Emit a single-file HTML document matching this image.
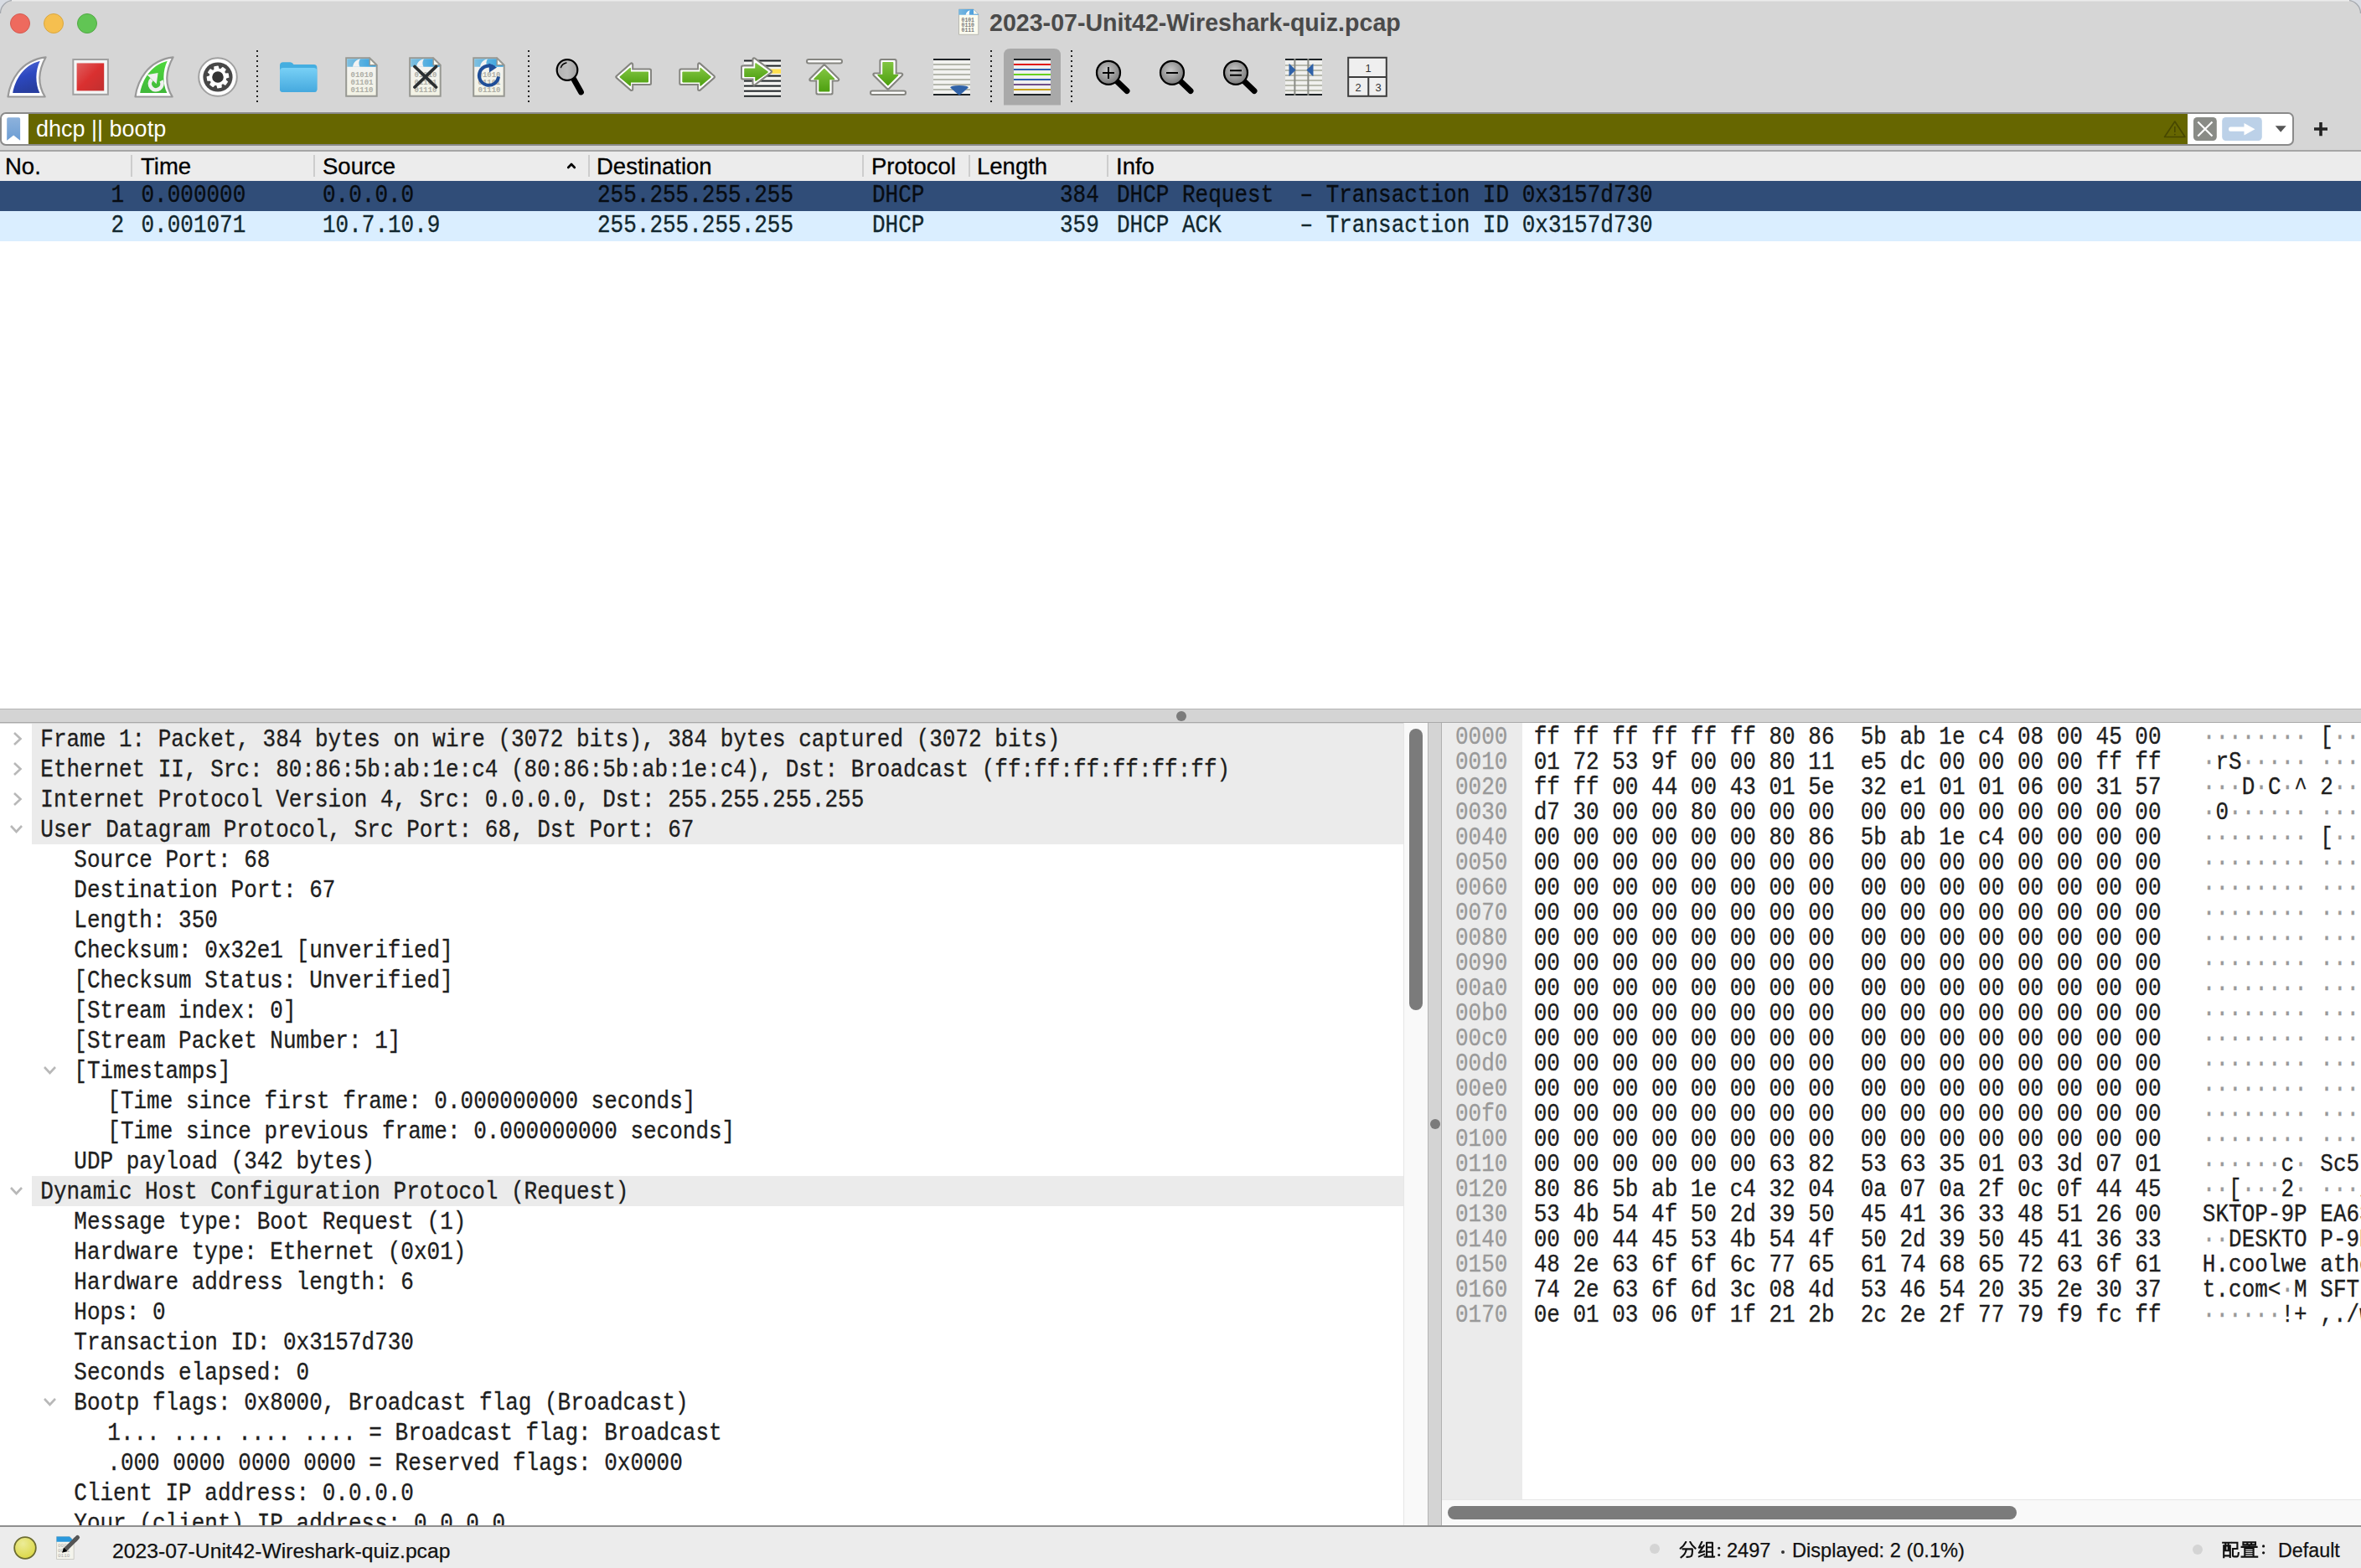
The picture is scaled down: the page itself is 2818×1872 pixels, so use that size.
<!DOCTYPE html>
<html><head><meta charset="utf-8">
<style>
*{margin:0;padding:0;box-sizing:border-box}
html,body{width:2818px;height:1872px;overflow:hidden;background:#d6d6d6}
body{position:relative;font-family:"Liberation Sans",sans-serif;color:#1e1e1e}
.a{position:absolute}
.mono{font-family:"Liberation Mono",monospace;font-size:26px;white-space:pre;-webkit-text-stroke:0.3px currentColor;transform:scaleY(1.12);transform-origin:0 24px}
.sans{font-family:"Liberation Sans",sans-serif;white-space:pre}
#title{left:1181px;top:7px;font-size:28.6px;font-weight:bold;color:#4a4a4a;line-height:40px}
.tl{width:24px;height:24px;border-radius:50%;top:16px}
.sep{width:2px;top:60px;height:62px;background:repeating-linear-gradient(to bottom,#222 0 2px,transparent 2px 6px)}
#filter{left:0;top:134px;width:2738px;height:40px;border:2px solid #8a8a8a;border-radius:7px;background:#fff;overflow:hidden}
#olive{left:32px;top:0;width:2577px;height:36px;background:#666600}
#ftext{left:43px;top:134px;height:40px;line-height:40px;font-size:27px;color:#fff}
#hdr{left:0;top:179px;width:2818px;height:37px;background:#ececec;border-top:2px solid #a6a6a6}
.hd{top:180.5px;height:35px;line-height:36px;font-size:27.5px;color:#000;-webkit-text-stroke:0.3px #000;margin-left:1px}
.hdiv{top:185px;width:2px;height:26px;background:#cdcdcd}
.row{left:0;width:2818px;height:36px}
.pr{line-height:36px;color:#12272e}
.sel{color:#070c12}
#plist{left:0;top:287px;width:2818px;height:559px;background:#fff}
#hsplit{left:0;top:846px;width:2818px;height:17px;background:#d4d4d4;border-top:1px solid #b4b4b4;border-bottom:1px solid #a9a9a9}
#detail{left:0;top:864px;width:1704px;height:958px;background:#fff;overflow:hidden}
.dr{left:0;width:1675px;height:36px;line-height:36px}
.dg{background:#ebebeb}
.dt{color:#1e1e1e}
#vscroll{left:1675px;top:863px;width:30px;height:958px;background:#f9f9f9;border-left:1px solid #e6e6e6;border-right:1px solid #b4b4b4}
#vsplit{left:1705px;top:863px;width:15px;height:958px;background:#d4d4d4}
#hex{left:1720px;top:863px;width:1098px;height:958px;background:#fff;border-left:1px solid #b0b0b0;overflow:hidden}
#offcol{left:0;top:0;width:96px;height:927px;background:#ebebeb}
.hx{line-height:30px;height:30px}
#hscroll{left:0;top:927px;width:1098px;height:31px;background:#f9f9f9;border-top:1px solid #e6e6e6}
.dg{left:38px;width:1637px;height:36px;background:#ebebeb}
.dt{line-height:36px;height:36px;color:#1e1e1e}
.hr{position:absolute;left:16px;line-height:30px;height:30px;color:#1e1e1e;font-family:"Liberation Mono",monospace;font-size:26px;white-space:pre;-webkit-text-stroke:0.3px currentColor;transform:scaleY(1.12);transform-origin:0 21px}
.hr b{font-weight:normal;color:#999}
.hr i{font-style:normal;color:#999}
#status{left:0;top:1821px;width:2818px;height:51px;background:#ececec;border-top:2px solid #8f8f8f}
</style></head><body>

<!-- title bar -->
<div class="a tl" style="left:12px;background:#ee6a5e;border:1px solid #d45a50"></div>
<div class="a tl" style="left:52px;background:#f5bf4f;border:1px solid #d9a73f"></div>
<div class="a tl" style="left:92px;background:#61c554;border:1px solid #52a845"></div>
<div class="a" id="title">2023-07-Unit42-Wireshark-quiz.pcap</div>

<svg class="a" style="left:0;top:0" width="1700" height="134" viewBox="0 0 1700 134">
<defs>
<linearGradient id="gBlue" x1="0" y1="0" x2="0.3" y2="1"><stop offset="0" stop-color="#5a70d8"/><stop offset="0.55" stop-color="#2c48c0"/><stop offset="1" stop-color="#283ea0"/></linearGradient>
<linearGradient id="gRed" x1="0" y1="0" x2="1" y2="1"><stop offset="0" stop-color="#e06060"/><stop offset="0.5" stop-color="#da3030"/><stop offset="1" stop-color="#c03030"/></linearGradient>
<linearGradient id="gGreenFin" x1="0" y1="0" x2="0" y2="1"><stop offset="0" stop-color="#4ed83c"/><stop offset="1" stop-color="#40b83a"/></linearGradient>
<linearGradient id="gArrow" x1="0" y1="0" x2="0" y2="1"><stop offset="0" stop-color="#80c440"/><stop offset="1" stop-color="#4ea010"/></linearGradient>
<linearGradient id="gFolder" x1="0" y1="0" x2="0" y2="1"><stop offset="0" stop-color="#78d0f6"/><stop offset="1" stop-color="#45a9de"/></linearGradient>
<linearGradient id="gDocTop" x1="0" y1="0" x2="1" y2="0"><stop offset="0" stop-color="#80c0e0"/><stop offset="1" stop-color="#30a0e0"/></linearGradient>
<linearGradient id="gDoc" x1="0" y1="0" x2="0" y2="1"><stop offset="0" stop-color="#f4f4f4"/><stop offset="1" stop-color="#f2f2e4"/></linearGradient>
<radialGradient id="gLens" cx="0.45" cy="0.4" r="0.6"><stop offset="0" stop-color="#c8c8c8"/><stop offset="1" stop-color="#7a7a7a"/></radialGradient>
<linearGradient id="gLens2" x1="0" y1="0" x2="1" y2="0"><stop offset="0" stop-color="#b0b0b0"/><stop offset="0.5" stop-color="#bdbdbd"/><stop offset="1" stop-color="#a0a0a0"/></linearGradient>
<g id="fin"><path d="M9.5 115.5 C12 97 24 72 54.6 68.3 C46 84 44 100 53.7 115.5 Z" fill="#fff" stroke="#999" stroke-width="2.2" stroke-linejoin="round"/></g>
<g id="doc"><path d="M413.2 69.2 H441.2 L449.7 77.6 V114.7 H413.2 Z" fill="url(#gDoc)" stroke="#979892" stroke-width="2"/>
<path d="M414.2 70.2 H440.8 L448.7 78.2 V79.8 H414.2 Z" fill="url(#gDocTop)"/>
<path d="M441.2 69.8 V77.6 H449 Z" fill="#f6f6ee" stroke="#979892" stroke-width="1.4"/>
<path d="M421 79.8 C422 74 426 71 430 70.6 C428 73 428 77 429.5 79.8 Z" fill="#f2f2f2"/>
<g font-family="Liberation Mono" font-size="9" fill="#a6a69e" font-weight="bold" opacity="0.9"><text x="418.5" y="92">01010</text><text x="418.5" y="101">01101</text><text x="418.5" y="110">01110</text></g></g>
</defs>
<!-- capture fin blue -->
<use href="#fin"/>
<path d="M15.2 110.9 C18 96 27 78 47.8 72.7 C42 84 42 100 47.4 110.9 Z" fill="url(#gBlue)"/>
<!-- stop -->
<rect x="87.3" y="71" width="41.6" height="41.8" fill="#f4f6f6" stroke="#a0a0a0" stroke-width="2"/>
<rect x="91.6" y="75.4" width="32.6" height="33" fill="url(#gRed)"/>
<!-- restart fin green -->
<use href="#fin" x="152"/>
<path d="M167.2 110.9 C170 96 179 78 199.8 72.7 C194 84 194 100 199.4 110.9 Z" fill="url(#gGreenFin)"/>
<path d="M181 94.8 A7.3 7.3 0 1 0 192.5 96.3" fill="none" stroke="#f0f0f0" stroke-width="4.6"/>
<path d="M175.5 89.2 L188.6 87 L186.8 100.3 Z" fill="#f0f0f0"/>
<!-- options gear -->
<circle cx="260" cy="92" r="22.8" fill="#fff" stroke="#a0a0a0" stroke-width="2"/>
<circle cx="260" cy="92" r="17.6" fill="#474747"/>
<g transform="translate(260 92)" fill="#fff">
<path d="M-3.90 -8.77 L-4.03 -12.04 L0.11 -12.70 L1.00 -9.55 L3.44 -8.96 L5.67 -11.37 L9.06 -8.90 L7.46 -6.04 L8.77 -3.90 L12.04 -4.03 L12.70 0.11 L9.55 1.00 L8.96 3.44 L11.37 5.67 L8.90 9.06 L6.04 7.46 L3.90 8.77 L4.03 12.04 L-0.11 12.70 L-1.00 9.55 L-3.44 8.96 L-5.67 11.37 L-9.06 8.90 L-7.46 6.04 L-8.77 3.90 L-12.04 4.03 L-12.70 -0.11 L-9.55 -1.00 L-8.96 -3.44 L-11.37 -5.67 L-8.90 -9.06 L-6.04 -7.46 Z" stroke="#fff" stroke-width="1.4" stroke-linejoin="round"/>
<circle r="6.8" fill="#333"/>
</g>
<!-- separators -->
<g fill="#1a1a1a"><rect x="306" y="60" width="2" height="2"/></g>
<!-- folder -->
<path d="M334 108 V78 Q334 74.2 338 74.2 H346.5 Q349 74.2 350.5 77 H374.5 Q378.4 77 378.4 81 V106.5 Q378.4 110 374.5 110 H338 Q334 110 334 106 Z" fill="#45aee0"/>
<path d="M334 85 Q334 81 338 81 H374.5 Q378.4 81 378.4 85 V106.5 Q378.4 110 374.5 110 H338 Q334 110 334 106.5 Z" fill="url(#gFolder)"/>
<!-- docs -->
<use href="#doc"/>
<use href="#doc" x="76"/>
<use href="#doc" x="152"/>
<path d="M495 79.5 L520.5 104 M520.5 79.5 L495 104" stroke="#2b2f31" stroke-width="3.8" stroke-linecap="round"/>
<path d="M590 80.6 A11.6 11.6 0 1 0 595 91.5" fill="none" stroke="#1f4e98" stroke-width="4"/>
<path d="M583.5 75.5 L593 80.5 L584 86.5 Z" fill="#1f4e98"/>
<!-- find -->
<line x1="684.5" y1="94" x2="693.5" y2="110" stroke="#000" stroke-width="6.8" stroke-linecap="round"/>
<circle cx="677" cy="83.5" r="12.3" fill="url(#gLens2)" stroke="#000" stroke-width="2.2"/>
<path d="M669.5 80.5 Q671 76 676 75" fill="none" stroke="#000" stroke-width="1.4" stroke-linecap="round"/>
<!-- prev arrow -->
<path d="M736.8 91.8 L753.7 77 V84 H775.5 V99.5 H753.7 V106.6 Z" fill="#858580" stroke="#858580" stroke-width="5" stroke-linejoin="round"/><path d="M736.8 91.8 L753.7 77 V84 H775.5 V99.5 H753.7 V106.6 Z" fill="#fff" stroke="#fff" stroke-width="1" stroke-linejoin="round"/><path d="M740.3 91.8 L752.2 81.6 V86.2 H773.2 V97.6 H752.2 V102 Z" fill="url(#gArrow)" stroke="url(#gArrow)" stroke-width="1.6" stroke-linejoin="round"/>
<!-- next arrow -->
<path d="M851.5 91.8 L834.6 77 V84 H812.8 V99.5 H834.6 V106.6 Z" fill="#858580" stroke="#858580" stroke-width="5" stroke-linejoin="round"/><path d="M851.5 91.8 L834.6 77 V84 H812.8 V99.5 H834.6 V106.6 Z" fill="#fff" stroke="#fff" stroke-width="1" stroke-linejoin="round"/><path d="M848 91.8 L836.1 81.6 V86.2 H815.1 V97.6 H836.1 V102 Z" fill="url(#gArrow)" stroke="url(#gArrow)" stroke-width="1.6" stroke-linejoin="round"/>
<!-- go to packet -->
<rect x="888" y="72" width="44" height="44" fill="#f2f2f0"/>
<g fill="#1e2326"><rect x="888" y="71.5" width="44" height="2"/><rect x="888" y="77.6" width="44" height="2"/><rect x="888" y="89.6" width="44" height="2"/><rect x="888" y="95.6" width="44" height="2"/><rect x="888" y="101.6" width="44" height="2"/><rect x="888" y="107.7" width="44" height="2"/><rect x="888" y="113.8" width="44" height="2"/></g>
<rect x="918" y="82.4" width="14" height="5.4" fill="#ffe050"/>
<path d="M886.5 93 V80 H900 V70.8 L919.5 85.5 L900 100.2 V93 Z" fill="#858580" stroke="#858580" stroke-width="5" stroke-linejoin="round"/><path d="M886.5 93 V80 H900 V70.8 L919.5 85.5 L900 100.2 V93 Z" fill="#fff" stroke="#fff" stroke-width="1" stroke-linejoin="round"/><path d="M889 91.2 V82.2 H902 V76 L916 86 L902 96 V91.2 Z" fill="url(#gArrow)" stroke="url(#gArrow)" stroke-width="1.6" stroke-linejoin="round"/>
<!-- first packet -->
<rect x="963" y="71" width="42" height="4.6" rx="2.3" fill="#fff" stroke="#858580" stroke-width="2"/>
<path d="M983.8 79 L999.8 95 H992.1 V111 H975.9 V95 H967.8 Z" fill="#858580" stroke="#858580" stroke-width="5" stroke-linejoin="round"/><path d="M983.8 79 L999.8 95 H992.1 V111 H975.9 V95 H967.8 Z" fill="#fff" stroke="#fff" stroke-width="1" stroke-linejoin="round"/><path d="M983.8 82.6 L995.5 94.4 H989.6 V108.8 H978 V94.4 H972.1 Z" fill="url(#gArrow)" stroke="url(#gArrow)" stroke-width="1.6" stroke-linejoin="round"/>
<!-- last packet -->
<rect x="1039" y="108.5" width="42" height="4.6" rx="2.3" fill="#fff" stroke="#858580" stroke-width="2"/>
<path d="M1059.8 105 L1075.8 89 H1068.1 V72.5 H1051.9 V89 H1043.8 Z" fill="#858580" stroke="#858580" stroke-width="5" stroke-linejoin="round"/><path d="M1059.8 105 L1075.8 89 H1068.1 V72.5 H1051.9 V89 H1043.8 Z" fill="#fff" stroke="#fff" stroke-width="1" stroke-linejoin="round"/><path d="M1059.8 101.4 L1071.5 89.6 H1065.6 V74.8 H1054 V89.6 H1048.1 Z" fill="url(#gArrow)" stroke="url(#gArrow)" stroke-width="1.6" stroke-linejoin="round"/>
<!-- autoscroll -->
<rect x="1114" y="71" width="44" height="42" fill="#f2f2f0"/>
<g fill="#b4b6ac"><rect x="1114" y="76" width="44" height="2"/><rect x="1114" y="82" width="44" height="2"/><rect x="1114" y="88" width="44" height="2"/><rect x="1114" y="94" width="44" height="2"/><rect x="1114" y="100" width="44" height="2"/><rect x="1114" y="106" width="44" height="2"/></g>
<rect x="1114" y="70" width="44" height="2" fill="#1e2326"/><rect x="1114" y="112" width="44" height="2" fill="#1e2326"/>
<path d="M1134.2 104.5 Q1134.2 102 1145 102 Q1155.8 102 1155.8 104.5 Q1150 110 1145 113.8 Q1140 110 1134.2 104.5 Z" fill="#3062a8"/>
<!-- colorize active -->
<path d="M1198 125.6 V66 Q1198 57.9 1206 57.9 H1258 Q1266 57.9 1266 66 V125.6 Z" fill="#a9a9a9"/>
<rect x="1210" y="71" width="44" height="42" fill="#f0f0f0"/>
<rect x="1210" y="70" width="44" height="2" fill="#1e2326"/><rect x="1210" y="112" width="44" height="2" fill="#1e2326"/>
<rect x="1210" y="76" width="44" height="2" fill="#e01818"/>
<rect x="1210" y="82" width="44" height="2" fill="#2a5cb0"/>
<rect x="1210" y="88" width="44" height="2" fill="#68d020"/>
<rect x="1210" y="94" width="44" height="2" fill="#2a5cb0"/>
<rect x="1210" y="100" width="44" height="2" fill="#70508a"/>
<rect x="1210" y="106" width="44" height="2" fill="#c8a018"/>
<!-- zoom in/out/normal -->
<g id="zm"><line x1="1333" y1="97" x2="1345" y2="108.5" stroke="#000" stroke-width="7" stroke-linecap="round"/>
<circle cx="1323" cy="86.8" r="14" fill="url(#gLens)" stroke="#000" stroke-width="2.2"/></g>
<use href="#zm" x="76"/>
<use href="#zm" x="152"/>
<path d="M1316 87 H1330 M1323 80 V94" stroke="#000" stroke-width="2"/>
<path d="M1392 87 H1406" stroke="#000" stroke-width="2"/>
<path d="M1468 84.3 H1482 M1468 89.7 H1482" stroke="#000" stroke-width="2"/>
<!-- resize columns -->
<rect x="1534" y="71" width="44" height="42" fill="#f0f0ee"/>
<g fill="#b8baae"><rect x="1534" y="77" width="44" height="2"/><rect x="1534" y="83" width="44" height="2"/><rect x="1534" y="89" width="44" height="2"/><rect x="1534" y="95" width="44" height="2"/><rect x="1534" y="101" width="44" height="2"/><rect x="1534" y="107" width="44" height="2"/></g>
<rect x="1534" y="70" width="44" height="2" fill="#1e2326"/><rect x="1534" y="112" width="44" height="2" fill="#1e2326"/>
<rect x="1544.4" y="70" width="2" height="44" fill="#8a8c86"/><rect x="1560.4" y="70" width="2" height="44" fill="#8a8c86"/>
<path d="M1538.5 77 Q1538 76 1539.5 76.5 L1546.5 83.5 L1539.5 90.5 Q1538 91 1538.5 90 Z" fill="#3062a8"/>
<path d="M1567.5 77 Q1568 76 1566.5 76.5 L1559.5 83.5 L1566.5 90.5 Q1568 91 1567.5 90 Z" fill="#3062a8"/>
<!-- layout -->
<rect x="1609.2" y="68.8" width="45.6" height="46" fill="#efefef" stroke="#3c3c3c" stroke-width="2"/>
<path d="M1609.2 91.9 H1654.8 M1633.3 91.9 V114.8" stroke="#3c3c3c" stroke-width="2"/>
<g font-family="Liberation Sans" font-size="13" fill="#333" text-anchor="middle"><text x="1633" y="86">1</text><text x="1621" y="109">2</text><text x="1645" y="109">3</text></g>
</svg>

<div class="a sep" style="left:306px"></div>
<div class="a sep" style="left:630px"></div>
<div class="a sep" style="left:1182px"></div>
<div class="a sep" style="left:1278px"></div>
<!-- filter -->
<div class="a" id="filter"><div class="a" id="olive"></div></div>
<div class="a sans" id="ftext">dhcp || bootp</div>

<!-- header -->
<div class="a" id="hdr"></div>
<div class="a sans hd" style="left:5px">No.</div>
<div class="a hdiv" style="left:156px"></div>
<div class="a sans hd" style="left:167px">Time</div>
<div class="a hdiv" style="left:374px"></div>
<div class="a sans hd" style="left:384px">Source</div>
<svg class="a" style="left:676px;top:192px" width="14" height="12"><polyline points="2.2,8 6,4 9.8,8" fill="none" stroke="#000" stroke-width="2.6" stroke-linecap="round" stroke-linejoin="round"/></svg>
<div class="a hdiv" style="left:702px"></div>
<div class="a sans hd" style="left:711px">Destination</div>
<div class="a hdiv" style="left:1029px"></div>
<div class="a sans hd" style="left:1039px">Protocol</div>
<div class="a hdiv" style="left:1156px"></div>
<div class="a sans hd" style="left:1165px">Length</div>
<div class="a hdiv" style="left:1321px"></div>
<div class="a sans hd" style="left:1331px">Info</div>

<!-- packet list -->
<div class="a" id="plist"></div>
<div class="a row" style="top:216px;background:#304d78"></div>
<div class="a row" style="top:252px;background:#daeeff"></div>
<div class="a mono pr sel" style="top:216px;left:132.5px">1</div>
<div class="a mono pr sel" style="top:216px;left:168.5px">0.000000</div>
<div class="a mono pr sel" style="top:216px;left:385px">0.0.0.0</div>
<div class="a mono pr sel" style="top:216px;left:713px">255.255.255.255</div>
<div class="a mono pr sel" style="top:216px;left:1041px">DHCP</div>
<div class="a mono pr sel" style="top:216px;left:1265px">384</div>
<div class="a mono pr sel" style="top:216px;left:1333px">DHCP Request  – Transaction ID 0x3157d730</div>
<div class="a mono pr" style="top:252px;left:132.5px">2</div>
<div class="a mono pr" style="top:252px;left:168.5px">0.001071</div>
<div class="a mono pr" style="top:252px;left:385px">10.7.10.9</div>
<div class="a mono pr" style="top:252px;left:713px">255.255.255.255</div>
<div class="a mono pr" style="top:252px;left:1041px">DHCP</div>
<div class="a mono pr" style="top:252px;left:1265px">359</div>
<div class="a mono pr" style="top:252px;left:1333px">DHCP ACK      – Transaction ID 0x3157d730</div>

<div class="a" id="hsplit"></div>
<div class="a" id="detail">
<div class="a dg" style="top:0px"></div>
<svg class="a" style="left:15px;top:8.5px" width="12" height="18"><polyline points="2,2 9.5,9 2,16" fill="none" stroke="#b8b8b8" stroke-width="2.6"/></svg>
<div class="a mono dt" style="left:48.3px;top:2px">Frame 1: Packet, 384 bytes on wire (3072 bits), 384 bytes captured (3072 bits)</div>
<div class="a dg" style="top:36px"></div>
<svg class="a" style="left:15px;top:44.5px" width="12" height="18"><polyline points="2,2 9.5,9 2,16" fill="none" stroke="#b8b8b8" stroke-width="2.6"/></svg>
<div class="a mono dt" style="left:48.3px;top:38px">Ethernet II, Src: 80:86:5b:ab:1e:c4 (80:86:5b:ab:1e:c4), Dst: Broadcast (ff:ff:ff:ff:ff:ff)</div>
<div class="a dg" style="top:72px"></div>
<svg class="a" style="left:15px;top:80.5px" width="12" height="18"><polyline points="2,2 9.5,9 2,16" fill="none" stroke="#b8b8b8" stroke-width="2.6"/></svg>
<div class="a mono dt" style="left:48.3px;top:74px">Internet Protocol Version 4, Src: 0.0.0.0, Dst: 255.255.255.255</div>
<div class="a dg" style="top:108px"></div>
<svg class="a" style="left:11px;top:120px" width="18" height="12"><polyline points="2,2 8.5,9 15,2" fill="none" stroke="#b8b8b8" stroke-width="2.6"/></svg>
<div class="a mono dt" style="left:48.3px;top:110px">User Datagram Protocol, Src Port: 68, Dst Port: 67</div>
<div class="a mono dt" style="left:88.3px;top:146px">Source Port: 68</div>
<div class="a mono dt" style="left:88.3px;top:182px">Destination Port: 67</div>
<div class="a mono dt" style="left:88.3px;top:218px">Length: 350</div>
<div class="a mono dt" style="left:88.3px;top:254px">Checksum: 0x32e1 [unverified]</div>
<div class="a mono dt" style="left:88.3px;top:290px">[Checksum Status: Unverified]</div>
<div class="a mono dt" style="left:88.3px;top:326px">[Stream index: 0]</div>
<div class="a mono dt" style="left:88.3px;top:362px">[Stream Packet Number: 1]</div>
<svg class="a" style="left:51px;top:408px" width="18" height="12"><polyline points="2,2 8.5,9 15,2" fill="none" stroke="#b8b8b8" stroke-width="2.6"/></svg>
<div class="a mono dt" style="left:88.3px;top:398px">[Timestamps]</div>
<div class="a mono dt" style="left:128.3px;top:434px">[Time since first frame: 0.000000000 seconds]</div>
<div class="a mono dt" style="left:128.3px;top:470px">[Time since previous frame: 0.000000000 seconds]</div>
<div class="a mono dt" style="left:88.3px;top:506px">UDP payload (342 bytes)</div>
<div class="a dg" style="top:540px"></div>
<svg class="a" style="left:11px;top:552px" width="18" height="12"><polyline points="2,2 8.5,9 15,2" fill="none" stroke="#b8b8b8" stroke-width="2.6"/></svg>
<div class="a mono dt" style="left:48.3px;top:542px">Dynamic Host Configuration Protocol (Request)</div>
<div class="a mono dt" style="left:88.3px;top:578px">Message type: Boot Request (1)</div>
<div class="a mono dt" style="left:88.3px;top:614px">Hardware type: Ethernet (0x01)</div>
<div class="a mono dt" style="left:88.3px;top:650px">Hardware address length: 6</div>
<div class="a mono dt" style="left:88.3px;top:686px">Hops: 0</div>
<div class="a mono dt" style="left:88.3px;top:722px">Transaction ID: 0x3157d730</div>
<div class="a mono dt" style="left:88.3px;top:758px">Seconds elapsed: 0</div>
<svg class="a" style="left:51px;top:804px" width="18" height="12"><polyline points="2,2 8.5,9 15,2" fill="none" stroke="#b8b8b8" stroke-width="2.6"/></svg>
<div class="a mono dt" style="left:88.3px;top:794px">Bootp flags: 0x8000, Broadcast flag (Broadcast)</div>
<div class="a mono dt" style="left:128.3px;top:830px">1... .... .... .... = Broadcast flag: Broadcast</div>
<div class="a mono dt" style="left:128.3px;top:866px">.000 0000 0000 0000 = Reserved flags: 0x0000</div>
<div class="a mono dt" style="left:88.3px;top:902px">Client IP address: 0.0.0.0</div>
<div class="a mono dt" style="left:88.3px;top:938px">Your (client) IP address: 0.0.0.0</div>
</div>
<div class="a" id="vscroll"></div>
<div class="a" id="vsplit"></div>
<div class="a" id="hex"><div class="a" id="offcol"></div>
<div class="hr" style="top:3px"><b>0000</b>  ff ff ff ff ff ff 80 86  5b ab 1e c4 08 00 45 00   <span style="position:relative;left:2.5px"><i>·</i><i>·</i><i>·</i><i>·</i><i>·</i><i>·</i><i>·</i><i>·</i> [<i>·</i><i>·</i><i>·</i><i>·</i><i>·</i>E<i>·</i></span></div>
<div class="hr" style="top:33px"><b>0010</b>  01 72 53 9f 00 00 80 11  e5 dc 00 00 00 00 ff ff   <span style="position:relative;left:2.5px"><i>·</i>rS<i>·</i><i>·</i><i>·</i><i>·</i><i>·</i> <i>·</i><i>·</i><i>·</i><i>·</i><i>·</i><i>·</i><i>·</i><i>·</i></span></div>
<div class="hr" style="top:63px"><b>0020</b>  ff ff 00 44 00 43 01 5e  32 e1 01 01 06 00 31 57   <span style="position:relative;left:2.5px"><i>·</i><i>·</i><i>·</i>D<i>·</i>C<i>·</i>^ 2<i>·</i><i>·</i><i>·</i><i>·</i><i>·</i>1W</span></div>
<div class="hr" style="top:93px"><b>0030</b>  d7 30 00 00 80 00 00 00  00 00 00 00 00 00 00 00   <span style="position:relative;left:2.5px"><i>·</i>0<i>·</i><i>·</i><i>·</i><i>·</i><i>·</i><i>·</i> <i>·</i><i>·</i><i>·</i><i>·</i><i>·</i><i>·</i><i>·</i><i>·</i></span></div>
<div class="hr" style="top:123px"><b>0040</b>  00 00 00 00 00 00 80 86  5b ab 1e c4 00 00 00 00   <span style="position:relative;left:2.5px"><i>·</i><i>·</i><i>·</i><i>·</i><i>·</i><i>·</i><i>·</i><i>·</i> [<i>·</i><i>·</i><i>·</i><i>·</i><i>·</i><i>·</i><i>·</i></span></div>
<div class="hr" style="top:153px"><b>0050</b>  00 00 00 00 00 00 00 00  00 00 00 00 00 00 00 00   <span style="position:relative;left:2.5px"><i>·</i><i>·</i><i>·</i><i>·</i><i>·</i><i>·</i><i>·</i><i>·</i> <i>·</i><i>·</i><i>·</i><i>·</i><i>·</i><i>·</i><i>·</i><i>·</i></span></div>
<div class="hr" style="top:183px"><b>0060</b>  00 00 00 00 00 00 00 00  00 00 00 00 00 00 00 00   <span style="position:relative;left:2.5px"><i>·</i><i>·</i><i>·</i><i>·</i><i>·</i><i>·</i><i>·</i><i>·</i> <i>·</i><i>·</i><i>·</i><i>·</i><i>·</i><i>·</i><i>·</i><i>·</i></span></div>
<div class="hr" style="top:213px"><b>0070</b>  00 00 00 00 00 00 00 00  00 00 00 00 00 00 00 00   <span style="position:relative;left:2.5px"><i>·</i><i>·</i><i>·</i><i>·</i><i>·</i><i>·</i><i>·</i><i>·</i> <i>·</i><i>·</i><i>·</i><i>·</i><i>·</i><i>·</i><i>·</i><i>·</i></span></div>
<div class="hr" style="top:243px"><b>0080</b>  00 00 00 00 00 00 00 00  00 00 00 00 00 00 00 00   <span style="position:relative;left:2.5px"><i>·</i><i>·</i><i>·</i><i>·</i><i>·</i><i>·</i><i>·</i><i>·</i> <i>·</i><i>·</i><i>·</i><i>·</i><i>·</i><i>·</i><i>·</i><i>·</i></span></div>
<div class="hr" style="top:273px"><b>0090</b>  00 00 00 00 00 00 00 00  00 00 00 00 00 00 00 00   <span style="position:relative;left:2.5px"><i>·</i><i>·</i><i>·</i><i>·</i><i>·</i><i>·</i><i>·</i><i>·</i> <i>·</i><i>·</i><i>·</i><i>·</i><i>·</i><i>·</i><i>·</i><i>·</i></span></div>
<div class="hr" style="top:303px"><b>00a0</b>  00 00 00 00 00 00 00 00  00 00 00 00 00 00 00 00   <span style="position:relative;left:2.5px"><i>·</i><i>·</i><i>·</i><i>·</i><i>·</i><i>·</i><i>·</i><i>·</i> <i>·</i><i>·</i><i>·</i><i>·</i><i>·</i><i>·</i><i>·</i><i>·</i></span></div>
<div class="hr" style="top:333px"><b>00b0</b>  00 00 00 00 00 00 00 00  00 00 00 00 00 00 00 00   <span style="position:relative;left:2.5px"><i>·</i><i>·</i><i>·</i><i>·</i><i>·</i><i>·</i><i>·</i><i>·</i> <i>·</i><i>·</i><i>·</i><i>·</i><i>·</i><i>·</i><i>·</i><i>·</i></span></div>
<div class="hr" style="top:363px"><b>00c0</b>  00 00 00 00 00 00 00 00  00 00 00 00 00 00 00 00   <span style="position:relative;left:2.5px"><i>·</i><i>·</i><i>·</i><i>·</i><i>·</i><i>·</i><i>·</i><i>·</i> <i>·</i><i>·</i><i>·</i><i>·</i><i>·</i><i>·</i><i>·</i><i>·</i></span></div>
<div class="hr" style="top:393px"><b>00d0</b>  00 00 00 00 00 00 00 00  00 00 00 00 00 00 00 00   <span style="position:relative;left:2.5px"><i>·</i><i>·</i><i>·</i><i>·</i><i>·</i><i>·</i><i>·</i><i>·</i> <i>·</i><i>·</i><i>·</i><i>·</i><i>·</i><i>·</i><i>·</i><i>·</i></span></div>
<div class="hr" style="top:423px"><b>00e0</b>  00 00 00 00 00 00 00 00  00 00 00 00 00 00 00 00   <span style="position:relative;left:2.5px"><i>·</i><i>·</i><i>·</i><i>·</i><i>·</i><i>·</i><i>·</i><i>·</i> <i>·</i><i>·</i><i>·</i><i>·</i><i>·</i><i>·</i><i>·</i><i>·</i></span></div>
<div class="hr" style="top:453px"><b>00f0</b>  00 00 00 00 00 00 00 00  00 00 00 00 00 00 00 00   <span style="position:relative;left:2.5px"><i>·</i><i>·</i><i>·</i><i>·</i><i>·</i><i>·</i><i>·</i><i>·</i> <i>·</i><i>·</i><i>·</i><i>·</i><i>·</i><i>·</i><i>·</i><i>·</i></span></div>
<div class="hr" style="top:483px"><b>0100</b>  00 00 00 00 00 00 00 00  00 00 00 00 00 00 00 00   <span style="position:relative;left:2.5px"><i>·</i><i>·</i><i>·</i><i>·</i><i>·</i><i>·</i><i>·</i><i>·</i> <i>·</i><i>·</i><i>·</i><i>·</i><i>·</i><i>·</i><i>·</i><i>·</i></span></div>
<div class="hr" style="top:513px"><b>0110</b>  00 00 00 00 00 00 63 82  53 63 35 01 03 3d 07 01   <span style="position:relative;left:2.5px"><i>·</i><i>·</i><i>·</i><i>·</i><i>·</i><i>·</i>c<i>·</i> Sc5<i>·</i><i>·</i>=<i>·</i><i>·</i></span></div>
<div class="hr" style="top:543px"><b>0120</b>  80 86 5b ab 1e c4 32 04  0a 07 0a 2f 0c 0f 44 45   <span style="position:relative;left:2.5px"><i>·</i><i>·</i>[<i>·</i><i>·</i><i>·</i>2<i>·</i> <i>·</i><i>·</i><i>·</i>/<i>·</i><i>·</i>DE</span></div>
<div class="hr" style="top:573px"><b>0130</b>  53 4b 54 4f 50 2d 39 50  45 41 36 33 48 51 26 00   <span style="position:relative;left:2.5px">SKTOP-9P EA63HQ&amp;<i>·</i></span></div>
<div class="hr" style="top:603px"><b>0140</b>  00 00 44 45 53 4b 54 4f  50 2d 39 50 45 41 36 33   <span style="position:relative;left:2.5px"><i>·</i><i>·</i>DESKTO P-9PEA63</span></div>
<div class="hr" style="top:633px"><b>0150</b>  48 2e 63 6f 6f 6c 77 65  61 74 68 65 72 63 6f 61   <span style="position:relative;left:2.5px">H.coolwe athercoa</span></div>
<div class="hr" style="top:663px"><b>0160</b>  74 2e 63 6f 6d 3c 08 4d  53 46 54 20 35 2e 30 37   <span style="position:relative;left:2.5px">t.com&lt;<i>·</i>M SFT 5.07</span></div>
<div class="hr" style="top:693px"><b>0170</b>  0e 01 03 06 0f 1f 21 2b  2c 2e 2f 77 79 f9 fc ff   <span style="position:relative;left:2.5px"><i>·</i><i>·</i><i>·</i><i>·</i><i>·</i><i>·</i>!+ ,./wy<i>·</i><i>·</i><i>·</i></span></div>
<div class="a" id="hscroll"></div></div>
<div class="a" id="status"></div>

<!-- title doc icon -->
<svg class="a" style="left:1140px;top:8px" width="32" height="36" viewBox="0 0 32 36">
<defs><linearGradient id="gTb" x1="0" y1="0" x2="1" y2="0"><stop offset="0" stop-color="#7ab8e0"/><stop offset="1" stop-color="#3f98dc"/></linearGradient></defs>
<path d="M4.5 3 H22 L27.8 9 V33.3 H4.5 Z" fill="#fbfbef" stroke="#b4b4ac" stroke-width="0.9"/>
<path d="M4.2 3 H22 L27.8 9 V9.8 H4.2 Z" fill="url(#gTb)"/>
<path d="M22 3.2 V8.8 H27.4 Z" fill="#f4f4ea"/>
<path d="M12.6 9.8 C13.3 7 15 5 17.8 4.3 C16.8 6 16.6 8 17 9.8 Z" fill="#fff"/>
<g font-family="Liberation Mono" font-size="6.4" fill="#7a7a7a" font-weight="bold"><text x="7.6" y="17.9">0101</text><text x="7.6" y="23.9">0110</text><text x="7.6" y="29.9">0111</text></g>
</svg>
<!-- filter bar extras -->
<svg class="a" style="left:0;top:134px" width="40" height="40">
<defs><linearGradient id="gBm" x1="0" y1="0" x2="0" y2="1"><stop offset="0" stop-color="#8db2dc"/><stop offset="1" stop-color="#6c9dd4"/></linearGradient></defs>
<path d="M8.2 8 Q8.2 6.2 10 6.2 H22.3 Q24.1 6.2 24.1 8 V33.8 L16.2 27.6 L8.2 33.8 Z" fill="url(#gBm)"/>
</svg>
<svg class="a" style="left:2570px;top:134px" width="248" height="40" viewBox="2570 134 248 40">
<path d="M2583.5 163.5 L2595.8 145 L2608 163.5 Z" fill="none" stroke="#474700" stroke-width="1.6" stroke-linejoin="round"/>
<path d="M2595.8 151 V158" stroke="#474700" stroke-width="1.6"/><circle cx="2595.8" cy="160.6" r="0.9" fill="#474700"/>
<rect x="2618" y="140" width="27.8" height="28" rx="4.5" fill="#898b86"/>
<path d="M2623.3 145.5 L2640.5 162.5 M2640.5 145.5 L2623.3 162.5" stroke="#fff" stroke-width="2.2"/>
<rect x="2652.2" y="140" width="47.6" height="28" rx="4.5" fill="#bcd1e8"/>
<path d="M2662 151.6 H2678.5 V147 L2691.5 154.2 L2678.5 161.4 V156.8 H2662 Q2660 156.8 2660 154.2 Q2660 151.6 2662 151.6 Z" fill="#fff"/>
<path d="M2715.7 150.2 H2728.7 L2722.2 157.8 Z" fill="#555"/>
<path d="M2762 154 H2778 M2770 146 V162.2" stroke="#222" stroke-width="3.6"/>
</svg>
<!-- splitter handles -->
<div class="a" style="left:1403.8px;top:848.6px;width:12px;height:12px;border-radius:50%;background:#7b7b7b"></div>
<div class="a" style="left:1706.8px;top:1335.8px;width:12px;height:12px;border-radius:50%;background:#7b7b7b"></div>
<!-- scroll thumbs -->
<div class="a" style="left:1682px;top:870px;width:16px;height:336px;border-radius:8px;background:#7b7b7b"></div>
<div class="a" style="left:1728px;top:1798px;width:679px;height:16px;border-radius:8px;background:#7b7b7b"></div>
<!-- status bar -->
<svg class="a" style="left:0;top:1823px" width="110" height="49" viewBox="0 1823 110 49">
<defs><radialGradient id="gY" cx="0.4" cy="0.3" r="0.7"><stop offset="0" stop-color="#ecec98"/><stop offset="1" stop-color="#dcd848"/></radialGradient></defs>
<circle cx="30" cy="1848" r="12.8" fill="url(#gY)" stroke="#6b6b30" stroke-width="1.8"/>
<path d="M67.5 1834.5 H83 L88.2 1839.5 V1861.5 H67.5 Z" fill="#f4f4ec" stroke="#c4c4bc" stroke-width="0.8"/>
<path d="M67.5 1834.5 H83 L87.5 1839 V1840.7 H67.5 Z" fill="#2a98dc"/>
<g font-family="Liberation Mono" font-size="6" fill="#aaa"><text x="69" y="1847">0000</text><text x="69" y="1853">0011</text><text x="69" y="1859">0110</text></g>
<path d="M78 1850 L91 1837" stroke="#555" stroke-width="5.2"/>
<path d="M89.5 1838.5 L92.5 1835.5" stroke="#555" stroke-width="5.2" stroke-linecap="round"/>
<path d="M74.2 1853.8 L76 1847.5 L80.5 1852 Z" fill="#000"/>
</svg>
<div class="a sans" style="left:134px;top:1837px;font-size:24.7px;line-height:30px;color:#111;-webkit-text-stroke:0.25px #111">2023-07-Unit42-Wireshark-quiz.pcap</div>
<div class="a" style="left:1969px;top:1843px;width:12px;height:12px;border-radius:50%;background:#d4d4d4"></div>
<div class="a" style="left:2617px;top:1844px;width:12px;height:12px;border-radius:50%;background:#d4d4d4"></div>
<svg class="a" style="left:2004px;top:1840px" width="52" height="22" viewBox="0 0 52 22" fill="none" stroke="#111" stroke-width="2.1" stroke-linecap="round" stroke-linejoin="round">
<path d="M8.2 0.9 Q5.5 6 1.6 8.6 M13.3 0.9 Q15 5 19.6 8.6 M4.4 9.4 H15.8 Q16.3 15 14.8 17.8 Q13.5 18.9 9.4 18.9 M8.7 10.2 Q7.5 16 2.4 19.3"/>
<path d="M27.3 0.7 L23.8 7.6 L28.2 7 M29.8 5.1 L23.8 13.8 L30.3 12 M23.8 18.4 L30.3 15.6"/>
<path d="M33 1.8 H39.9 V18.3 M33 1.8 V18.3 M33 7.2 H39.9 M33 12.8 H39.9 M30.5 18.6 H42.2"/>
<circle cx="47.7" cy="8.2" r="1.5" fill="#111" stroke="none"/><circle cx="47.7" cy="16.6" r="1.5" fill="#111" stroke="none"/>
</svg>
<div class="a sans" style="left:2061px;top:1836px;font-size:23.6px;line-height:30px;color:#111;-webkit-text-stroke:0.25px #111">2497</div>
<div class="a" style="left:2125.5px;top:1850.5px;width:4px;height:4px;border-radius:50%;background:#333"></div>
<div class="a sans" style="left:2139px;top:1836px;font-size:23.6px;line-height:30px;color:#111;-webkit-text-stroke:0.25px #111">Displayed: 2 (0.1%)</div>
<svg class="a" style="left:2652px;top:1840px" width="56" height="22" viewBox="0 0 56 22" fill="none" stroke="#111" stroke-width="2.1" stroke-linecap="square">
<path d="M1.2 1.8 H10.8 M2.2 5.4 H9.8 V19 M2.2 5.4 V19.2 M4.3 2 V11 M7.7 2 V11 M2.2 11.2 H9.8 M2.2 17.4 H9.8"/>
<path d="M12.4 1.8 H18.4 V9 H13 V17.4 Q13 18.4 14.5 18.4 H18 Q19.6 18.2 19.8 14"/>
<path d="M25.4 1.2 H40 V4.4 H25.4 Z M30.3 1.2 V4.4 M35.1 1.2 V4.4 M23.6 6.9 H41.6 M32.6 4.4 V8.6 M27.3 8.8 H37.6 V18 M27.3 8.8 V18.2 M23.6 18.6 H42.2"/>
<path d="M28.3 11.5 H36.6 M28.3 13.5 H36.6 M28.3 15.6 H36.6" stroke-width="1.1"/>
<circle cx="49.6" cy="5.9" r="1.6" fill="#111" stroke="none"/><circle cx="49.6" cy="13.8" r="1.6" fill="#111" stroke="none"/>
</svg>
<div class="a sans" style="left:2719px;top:1836px;font-size:23.3px;line-height:30px;color:#111;-webkit-text-stroke:0.25px #111">Default</div>
<!-- window corners -->
<svg class="a" style="left:0;top:0" width="20" height="20"><path d="M0 0 H16 A16 16 0 0 0 0 16 Z" fill="#d8dce3"/><path d="M16 0.5 A15.5 15.5 0 0 0 0.5 16" fill="none" stroke="#a3a7ad" stroke-width="1.2"/></svg>
<svg class="a" style="left:2798px;top:0" width="20" height="20"><path d="M20 0 H4 A16 16 0 0 1 20 16 Z" fill="#d8dce3"/><path d="M4 0.5 A15.5 15.5 0 0 1 19.5 16" fill="none" stroke="#a3a7ad" stroke-width="1.2"/></svg>
<!-- top edge highlight -->
<div class="a" style="left:14px;top:0;width:2790px;height:2px;background:linear-gradient(#f0f0f0,#dcdcdc)"></div>

</body></html>
